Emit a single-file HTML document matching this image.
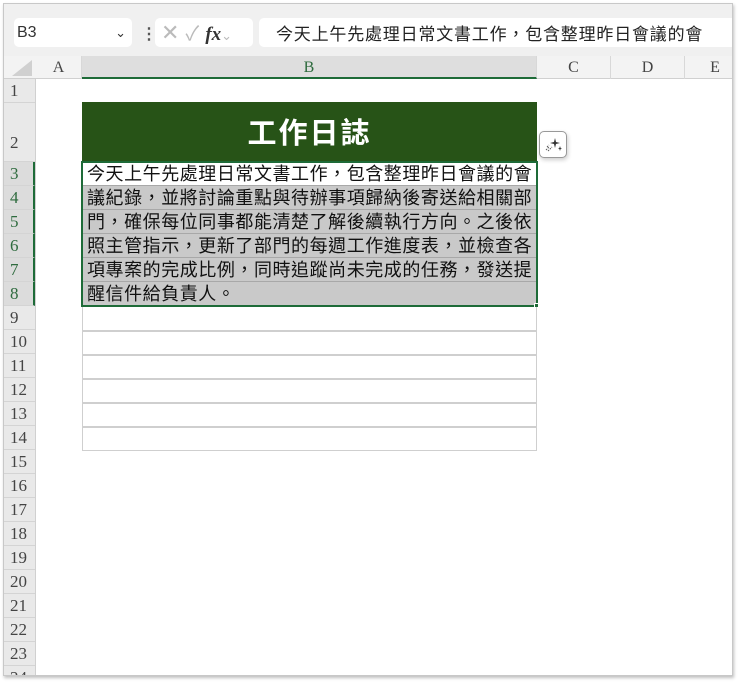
<!DOCTYPE html>
<html><head><meta charset="utf-8"><style>
*{box-sizing:border-box;margin:0;padding:0}
body{width:740px;height:683px;background:#fff;position:relative;overflow:hidden;font-family:"Liberation Sans","Noto Sans CJK TC",sans-serif}
.frame{position:absolute;left:3px;top:3px;width:730px;height:673px;border:1px solid #c8c8c8;box-shadow:1px 2px 3px rgba(0,0,0,.25);background:#f0f0f0;overflow:hidden}
.abs{position:absolute}
.box{background:#fff;border-radius:5px}
.rh{position:absolute;left:0;width:31px;border-bottom:1px solid #d4d4d4;background:#e9e9e9;font-family:"Liberation Serif",serif;font-size:17px;color:#444;text-align:left;padding-left:6px}
.ch{position:absolute;top:52px;height:23px;font-family:"Liberation Serif",serif;font-size:16px;color:#444;text-align:center;line-height:23px;border-right:1px solid #d8d8d8}
.line{position:absolute;left:78px;width:455px;height:24px;font-family:"Noto Sans CJK TC",sans-serif;font-size:18px;letter-spacing:0.55px;line-height:23px;padding-left:5px;color:#111;white-space:nowrap;overflow:hidden;border-bottom:1px solid #a8a8a8}
.empty{position:absolute;left:78px;width:455px;height:24px;border:1px solid #cfcfcf;border-top:none;background:#fff}
</style></head><body>
<div class="frame">
 <div class="abs box" style="left:10px;top:14px;width:118px;height:29px;font-size:16px;color:#333;line-height:29px;padding-left:3px">B3<span style="position:absolute;right:6px;top:0;font-size:13px">&#8964;</span></div>
 <div class="abs" style="left:137px;top:20px;font-size:16px;color:#555;font-weight:bold">&#8942;</div>
 <div class="abs box" style="left:151px;top:14px;width:98px;height:29px;color:#bbb;font-size:22px;line-height:29px;padding-left:6px">✕ <span style="font-size:20px">✓</span> <i style="font-family:'Liberation Serif',serif;color:#333;font-weight:bold;font-size:19px">fx</i><span style="font-size:13px">&#8964;</span></div>
 <div class="abs box" style="left:255px;top:14px;width:480px;height:29px;font-size:17px;color:#222;line-height:29px;padding-left:17px;letter-spacing:0.8px;white-space:nowrap;font-family:'Noto Sans CJK TC',sans-serif">今天上午先處理日常文書工作，包含整理昨日會議的會</div>
 <div class="abs" style="left:0;top:52px;width:730px;height:621px;background:#fff"></div>
 <div class="abs" style="left:0;top:52px;width:730px;height:23px;background:#f3f3f3;border-bottom:1px solid #d0d0d0"></div>
 <div class="abs" style="left:8px;top:56px;width:0;height:0;border-left:20px solid transparent;border-bottom:16px solid #d0d0d0"></div>
 <div class="ch" style="left:32px;width:46px">A</div>
 <div class="ch" style="left:78px;width:455px;background:#dedede;color:#2e6b3e;border-bottom:2px solid #1e6b38">B</div>
 <div class="ch" style="left:533px;width:74px">C</div>
 <div class="ch" style="left:607px;width:74px">D</div>
 <div class="ch" style="left:681px;width:60px;border:none">E</div>
 <div class="abs" style="left:0;top:75px;width:32px;height:600px;background:#e9e9e9;border-right:1px solid #d0d0d0"></div>
 <div class="rh" style="top:75px;height:24px;line-height:24px">1</div>
 <div class="rh" style="top:99px;height:59px;line-height:80px">2</div>
 <div class="rh" style="top:158px;height:24px;line-height:24px;color:#2e6b3e;background:#dcdcdc;border-right:2px solid #1e6b38">3</div>
 <div class="rh" style="top:182px;height:24px;line-height:24px;color:#2e6b3e;background:#dcdcdc;border-right:2px solid #1e6b38">4</div>
 <div class="rh" style="top:206px;height:24px;line-height:24px;color:#2e6b3e;background:#dcdcdc;border-right:2px solid #1e6b38">5</div>
 <div class="rh" style="top:230px;height:24px;line-height:24px;color:#2e6b3e;background:#dcdcdc;border-right:2px solid #1e6b38">6</div>
 <div class="rh" style="top:254px;height:24px;line-height:24px;color:#2e6b3e;background:#dcdcdc;border-right:2px solid #1e6b38">7</div>
 <div class="rh" style="top:278px;height:24px;line-height:24px;color:#2e6b3e;background:#dcdcdc;border-right:2px solid #1e6b38">8</div>
 <div class="rh" style="top:302px;height:24px;line-height:24px">9</div>
 <div class="rh" style="top:326px;height:24px;line-height:24px">10</div>
 <div class="rh" style="top:350px;height:24px;line-height:24px">11</div>
 <div class="rh" style="top:374px;height:24px;line-height:24px">12</div>
 <div class="rh" style="top:398px;height:24px;line-height:24px">13</div>
 <div class="rh" style="top:422px;height:24px;line-height:24px">14</div>
 <div class="rh" style="top:446px;height:24px;line-height:24px">15</div>
 <div class="rh" style="top:470px;height:24px;line-height:24px">16</div>
 <div class="rh" style="top:494px;height:24px;line-height:24px">17</div>
 <div class="rh" style="top:518px;height:24px;line-height:24px">18</div>
 <div class="rh" style="top:542px;height:24px;line-height:24px">19</div>
 <div class="rh" style="top:566px;height:24px;line-height:24px">20</div>
 <div class="rh" style="top:590px;height:24px;line-height:24px">21</div>
 <div class="rh" style="top:614px;height:24px;line-height:24px">22</div>
 <div class="rh" style="top:638px;height:24px;line-height:24px">23</div>
 <div class="rh" style="top:662px;height:24px;line-height:24px">24</div>
 <div class="abs" style="left:78px;top:98px;width:455px;height:60px;background:#275317;color:#fff;font-size:29px;font-weight:bold;text-align:center;line-height:58px;letter-spacing:2px;font-family:'Noto Sans CJK TC',sans-serif">工作日誌</div>
 <div class="line" style="top:158px;background:#fff">今天上午先處理日常文書工作，包含整理昨日會議的會</div>
 <div class="line" style="top:182px;background:#c9c9c9">議紀錄，並將討論重點與待辦事項歸納後寄送給相關部</div>
 <div class="line" style="top:206px;background:#c9c9c9">門，確保每位同事都能清楚了解後續執行方向。之後依</div>
 <div class="line" style="top:230px;background:#c9c9c9">照主管指示，更新了部門的每週工作進度表，並檢查各</div>
 <div class="line" style="top:254px;background:#c9c9c9">項專案的完成比例，同時追蹤尚未完成的任務，發送提</div>
 <div class="line" style="top:278px;background:#c9c9c9;border-bottom:none">醒信件給負責人。</div>
 <div class="abs" style="left:77px;top:157px;width:457px;height:146px;border:2px solid #1e6b38"></div>
 <div class="abs" style="left:530px;top:299px;width:5px;height:5px;background:#1e6b38;border:1px solid #fff"></div>
 <div class="empty" style="top:303px"></div>
 <div class="empty" style="top:327px;border-top:1px solid #cfcfcf;height:24px"></div>
 <div class="empty" style="top:351px;border-top:1px solid #cfcfcf"></div>
 <div class="empty" style="top:375px;border-top:1px solid #cfcfcf"></div>
 <div class="empty" style="top:399px;border-top:1px solid #cfcfcf"></div>
 <div class="empty" style="top:423px;border-top:1px solid #cfcfcf"></div>
 <div class="abs" style="left:535px;top:127px;width:28px;height:27px;background:#fff;border:1px solid #999;border-radius:5px;box-shadow:1px 2px 4px rgba(0,0,0,.2)">
  <svg width="26" height="25" viewBox="0 0 26 25"><path d="M15 6 L16 10 L20 11 L16 12 L15 16 L14 12 L10 11 L14 10Z" fill="#333"/><path d="M20 14 L20.6 16 L22 16.5 L20.6 17 L20 19 L19.4 17 L18 16.5 L19.4 16Z" fill="#333"/><path d="M6 18 L9 15 M8 19 L12 15 M7 15 L9 13" stroke="#555" stroke-width="1" stroke-dasharray="1.5 1"/></svg>
 </div>
</div>
</body></html>
